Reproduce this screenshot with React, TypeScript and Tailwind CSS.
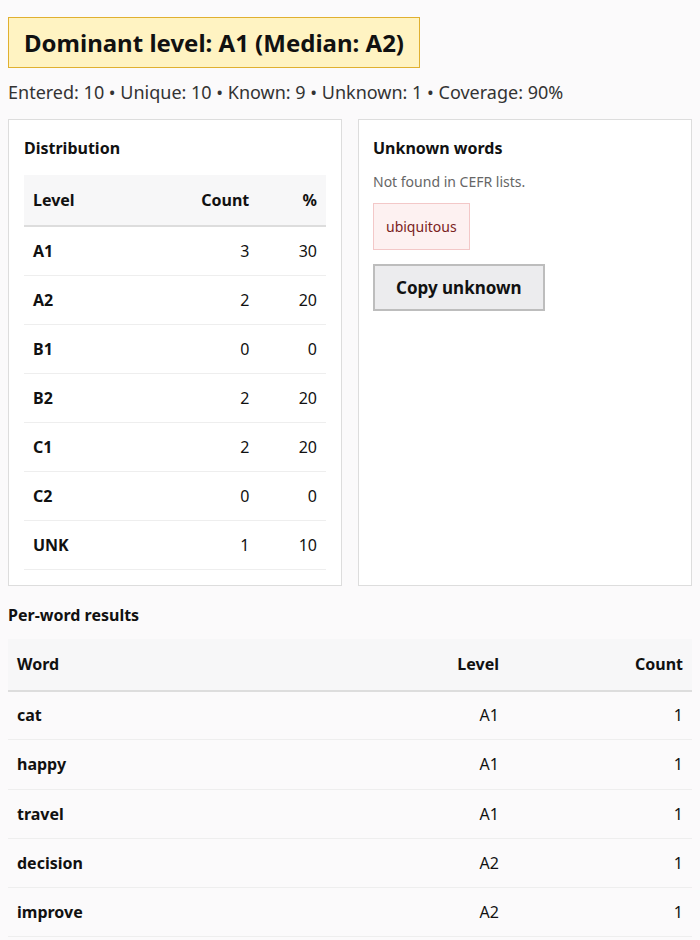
const distribution = [
  { level: "A1", count: 3, pct: 30 },
  { level: "A2", count: 2, pct: 20 },
  { level: "B1", count: 0, pct: 0 },
  { level: "B2", count: 2, pct: 20 },
  { level: "C1", count: 2, pct: 20 },
  { level: "C2", count: 0, pct: 0 },
  { level: "UNK", count: 1, pct: 10 },
];

const words = [
  { word: "cat", level: "A1", count: 1 },
  { word: "happy", level: "A1", count: 1 },
  { word: "travel", level: "A1", count: 1 },
  { word: "decision", level: "A2", count: 1 },
  { word: "improve", level: "A2", count: 1 },
];

export default function App() {
  return (
    <div className="min-h-[940px] bg-[#fbfafb] p-2 font-['Noto_Sans','Liberation_Sans',sans-serif] text-[16px] text-[#111]">
      {/* headline */}
      <div className="mt-[9px] inline-block border border-[#e0b030] bg-[#fff3c2] px-[15px] py-[8px] text-[24px] font-bold leading-[33px]">
        Dominant level: A1 (Median: A2)
      </div>
      <p className="mt-[10px] text-[18px] leading-[28px] text-[#333]">
        Entered: 10 • Unique: 10 • Known: 9 • Unknown: 1 • Coverage: 90%
      </p>

      <div className="mt-[13px] grid grid-cols-2 gap-4">
        {/* distribution card */}
        <div className="border border-[#ddd] bg-white px-[15px] pb-[15px] pt-[16px]">
          <h3 className="text-[16px] font-bold leading-[24px]">Distribution</h3>
          <table className="mt-[15px] w-full border-collapse">
            <thead>
              <tr className="border-b-2 border-[#ddd] bg-[#f7f7f8]">
                <th className="h-[51px] px-[9px] text-left font-bold">Level</th>
                <th className="h-[51px] px-[9px] text-right font-bold">Count</th>
                <th className="h-[51px] px-[9px] text-right font-bold">%</th>
              </tr>
            </thead>
            <tbody>
              {distribution.map((d) => (
                <tr key={d.level} className="border-b border-[#eee]">
                  <td className="h-[49px] px-[9px] font-bold">{d.level}</td>
                  <td className="h-[49px] px-[9px] text-right">{d.count}</td>
                  <td className="h-[49px] px-[9px] text-right">{d.pct}</td>
                </tr>
              ))}
            </tbody>
          </table>
        </div>

        {/* unknown words card */}
        <div className="flex flex-col items-start border border-[#ddd] bg-white px-[14px] pt-[16px]">
          <h3 className="text-[16px] font-bold leading-[24px]">Unknown words</h3>
          <p className="mt-[12px] text-[14px] leading-[20px] text-[#666]">Not found in CEFR lists.</p>
          <span className="mt-[11px] border border-[#f3c8c8] bg-[#fdf1f1] px-[12px] py-[11px] text-[14px] leading-[23px] text-[#7a2222]">
            ubiquitous
          </span>
          <button className="mt-[14px] border-2 border-[#bdbdbd] bg-[#ececee] px-[21px] py-[9px] text-[17px] font-bold leading-[25px]">
            Copy unknown
          </button>
        </div>
      </div>

      {/* per-word */}
      <h3 className="mt-[17px] text-[16px] font-bold leading-[24px]">Per-word results</h3>
      <table className="mt-[12px] w-full border-collapse">
        <thead>
          <tr className="border-b-2 border-[#ddd] bg-[#f7f7f8]">
            <th className="h-[52px] px-[9px] text-left font-bold">Word</th>
            <th className="h-[52px] w-[150px] px-[9px] text-right font-bold">Level</th>
            <th className="h-[52px] w-[184px] px-[9px] text-right font-bold">Count</th>
          </tr>
        </thead>
        <tbody>
          {words.map((w) => (
            <tr key={w.word} className="border-b border-[#eee]">
              <td className="h-[49.3px] px-[9px] font-bold">{w.word}</td>
              <td className="h-[49.3px] px-[9px] text-right">{w.level}</td>
              <td className="h-[49.3px] px-[9px] text-right">{w.count}</td>
            </tr>
          ))}
        </tbody>
      </table>
    </div>
  );
}
